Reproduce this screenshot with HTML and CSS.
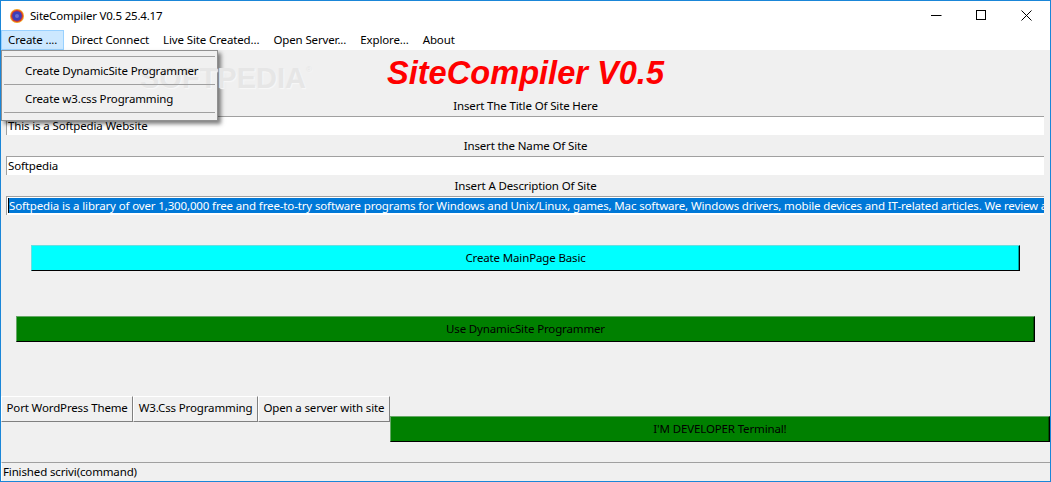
FILE: index.html
```html
<!DOCTYPE html>
<html lang="en">
<head>
<meta charset="utf-8">
<title>SiteCompiler V0.5 25.4.17</title>
<link rel="stylesheet" href="styles.css">
</head>
<body>
<div class="window">
  <header class="titlebar">
    <svg class="app-icon" width="16" height="16" viewBox="0 0 16 16"><circle cx="8" cy="8" r="7" fill="#f0a020"/><circle cx="8" cy="8" r="6" fill="#d8352f"/><circle cx="8" cy="8" r="4.8" fill="#3b3fb8"/><circle cx="8" cy="8" r="2" fill="#6a6fd0"/></svg>
    <span class="title-text">SiteCompiler V0.5 25.4.17</span>
    <div class="controls">
      <span class="control"><svg width="11" height="11" viewBox="0 0 11 11"><path d="M0 5.5H10.5" stroke="#000" fill="none"/></svg></span>
      <span class="control"><svg width="11" height="11" viewBox="0 0 11 11"><rect x="0.5" y="0.5" width="9" height="9" stroke="#000" fill="none"/></svg></span>
      <span class="control"><svg width="11" height="11" viewBox="0 0 11 11"><path d="M0.5 0.5L10.5 10.5M10.5 0.5L0.5 10.5" stroke="#000" fill="none"/></svg></span>
    </div>
  </header>
  <nav class="menubar">
    <span class="menu-item active">Create ....</span>
    <span class="menu-item">Direct Connect</span>
    <span class="menu-item">Live Site Created...</span>
    <span class="menu-item">Open Server...</span>
    <span class="menu-item">Explore...</span>
    <span class="menu-item">About</span>
  </nav>
  <main class="client">
    <div class="popup">
      <div class="sep"></div>
      <div class="popup-item">Create DynamicSite Programmer</div>
      <div class="sep"></div>
      <div class="popup-item">Create w3.css Programming</div>
      <div class="sep"></div>
    </div>
    <div class="watermark" aria-hidden="true">SOFTPEDIA<sup class="reg">®</sup></div>
    <h1 class="heading">SiteCompiler V0.5</h1>
    <div class="label">Insert The Title Of Site Here</div>
    <div class="entry">This is a Softpedia Website</div>
    <div class="label">Insert the Name Of Site</div>
    <div class="entry">Softpedia</div>
    <div class="label">Insert A Description Of Site</div>
    <div class="entry"><span class="selected">Softpedia is a library of over 1,300,000 free and free-to-try software programs for Windows and Unix/Linux, games, Mac software, Windows drivers, mobile devices and IT-related articles. We review and categorize these products in order to allow the visitor/user to find the exact product they and their system needs.</span></div>
    <button class="flat cyan">Create MainPage Basic</button>
    <button class="flat green wide">Use DynamicSite Programmer</button>
    <div class="bottom">
      <div class="tabs">
        <button class="raised">Port WordPress Theme</button>
        <button class="raised">W3.Css Programming</button>
        <button class="raised">Open a server with site</button>
      </div>
      <button class="flat green terminal">I'M DEVELOPER Terminal!</button>
    </div>
    <footer class="status">Finished scrivi(command)</footer>
  </main>
</div>
</body>
</html>
```
FILE: styles.css
```css
* { box-sizing: border-box; }
html, body { margin: 0; padding: 0; height: 100%; overflow: hidden; }
body { font: 11.5px "Noto Sans", "Liberation Sans", sans-serif; letter-spacing: -0.14px; color: #000; }
.window { width: 1051px; height: 482px; border: 1px solid #1a86d8; display: flex; flex-direction: column; background: #fff; overflow: hidden; }
.titlebar { height: 29px; display: flex; align-items: center; flex: none; }
.app-icon { margin-left: 8px; }
.title-text { margin-left: 5px; letter-spacing: -0.2px; }
.controls { margin-left: auto; margin-right: 1px; display: flex; }
.control { width: 45px; height: 29px; display: flex; align-items: center; justify-content: center; }
.menubar { height: 20px; display: flex; flex: none; letter-spacing: -0.13px; }
.menu-item { padding: 0 7px; line-height: 20px; }
.menu-item.active { background: #cce8ff; box-shadow: inset 0 0 0 1px #99d1ff; }
.client { position: relative; flex: 1; background: #f0f0f0; display: flex; flex-direction: column; min-height: 0; }
.popup { position: absolute; left: 0; top: 0; width: 217px; height: 71px; background: #f0f0f0; border: 1px solid #909090; padding: 5px 2px; box-shadow: 3px 3px 4px rgba(0,0,0,.5); display: flex; flex-direction: column; }
.popup .sep { height: 1px; background: #a0a0a0; flex: none; position: relative; z-index: 5; }
.popup-item { height: 27px; line-height: 27px; padding-left: 21px; flex: none; position: relative; z-index: 5; }
.watermark { position: absolute; left: 139px; top: 12px; font: bold 29px "Liberation Sans", sans-serif; letter-spacing: 0; color: #e6e6e6; text-shadow: 1px 1px 1px #f8f8f8; z-index: 4; }
.reg { font-size: 8px; vertical-align: 16px; font-weight: normal; line-height: 0; }
.heading { margin: 0; height: 47px; text-align: center; font: italic bold 32.6px/45px "Liberation Sans", sans-serif; letter-spacing: 0; color: #f00; position: relative; z-index: 2; }
.label { height: 19px; line-height: 18px; text-align: center; flex: none; }
.entry { height: 19px; line-height: 15px; margin: 0 6px 2px 5px; background: #fff; border-top: 1px solid #a0a0a0; border-left: 1px solid #a0a0a0; padding: 1px 0 0 1px; white-space: nowrap; overflow: hidden; flex: none; }
.selected { display: block; background: #0078d7; color: #fff; height: 15px; line-height: 15px; border-left: 1px solid #000; }
button { font: inherit; letter-spacing: inherit; color: #000; margin: 0; padding: 0 0 2px; }
.flat { display: block; height: 26px; border: 1px solid; flex: none; }
.cyan { background: #0ff; border-color: #66e0e0 #000 #000 #66e0e0; margin: 28px 30px 0 30px; width: 989px; box-shadow: inset -1px 0 0 #00a0a0; }
.green { background: #008000; border-color: #66a866 #000 #000 #66a866; box-shadow: inset -1px 0 0 #005000; }
.wide { margin: 45px 15px 0 15px; width: 1019px; }
.bottom { display: flex; align-items: flex-start; margin-top: 54px; flex: none; }
.tabs { display: flex; }
.raised { height: 26px; padding: 0 4.5px 3px; background: #f0f0f0; border: 1px solid; border-color: #fff #808080 #808080 #fff; }
.terminal { margin-top: 20px; flex: 1; }
.status { margin-top: auto; height: 19px; line-height: 18px; border-top: 1px solid #a0a0a0; border-left: 1px solid #fff; padding-left: 1px; }
```
